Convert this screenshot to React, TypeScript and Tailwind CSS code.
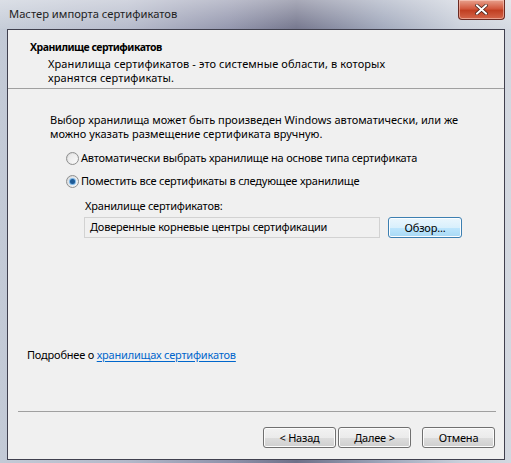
import React from 'react';

const font = { fontFamily: '"Noto Sans", "Open Sans", sans-serif' };

function Radio({ checked, label }: { checked?: boolean; label: string }) {
  return (
    <label className="flex items-center gap-[2px] h-[14px]">
      <span className="w-[13px] h-[13px] rounded-full border border-[#8e8f8f] bg-gradient-to-br from-[#d4d4d4] to-[#fbfbfb] flex items-center justify-center">
        <span className="w-[9px] h-[9px] rounded-full bg-gradient-to-br from-[#e6e6e6] to-[#fafafa] flex items-center justify-center">
          {checked && <span className="w-[5px] h-[5px] rounded-full bg-[#1d5a96] shadow-[0_0_1px_1px_#6fb0e6]" />}
        </span>
      </span>
      <span>{label}</span>
    </label>
  );
}

function Btn({ children, blue, className }: { children: React.ReactNode; blue?: boolean; className?: string }) {
  return (
    <button
      className={
        'h-[21px] rounded-[3px] border text-[11px] tracking-[-0.2px] text-black leading-none flex items-center justify-center ' +
        (blue
          ? 'border-[#3c7fb1] bg-[linear-gradient(#eaf6fd_0%,#d9f0fc_50%,#bee6fd_51%,#a7d9f5_100%)] shadow-[inset_0_0_0_1px_#fbfdff] '
          : 'border-[#707070] bg-[linear-gradient(#f2f2f2_0%,#ebebeb_50%,#dddddd_51%,#cfcfcf_100%)] shadow-[inset_0_0_0_1px_#fcfcfc] ') +
        (className ?? '')
      }
    >
      {children}
    </button>
  );
}

export default function App() {
  return (
    <div
      style={font}
      className="w-[511px] h-[463px] flex flex-col bg-[linear-gradient(90deg,#c3cad6_0%,#b3b8c9_25%,#8f92aa_45%,#6f7189_58%,#9ea6ba_75%,#c9cfda_90%,#d3d8e0_100%)] text-[11px] tracking-[-0.2px] text-black"
    >
      {/* title bar */}
      <div className="h-[29px] shrink-0 flex items-start justify-between pl-[9px] pr-[6px] bg-[linear-gradient(rgba(255,255,255,0.4),rgba(255,255,255,0.05))]">
        <div className="pt-[6px] text-[11.2px] tracking-normal text-[#1e1e1e]">Мастер импорта сертификатов</div>
        <div className="w-[47px] h-[20px] rounded-b-[4px] border border-t-0 border-[#6b2a22] bg-[linear-gradient(#e8a18d_0%,#d2593f_45%,#c13f22_55%,#d4664a_100%)] shadow-[inset_0_0_0_1px_rgba(255,220,210,0.5)] flex items-center justify-center">
          <svg width="13" height="11" viewBox="0 0 13 11">
            <path d="M2 1.5 L11 9.5 M11 1.5 L2 9.5" stroke="#3a1a14" strokeWidth="3.4" strokeLinecap="square" />
            <path d="M2 1.5 L11 9.5 M11 1.5 L2 9.5" stroke="#ffffff" strokeWidth="2" strokeLinecap="square" />
          </svg>
        </div>
      </div>

      {/* client area */}
      <div className="flex-1 ml-[7px] mr-[6px] mb-[3px] border border-[#40404e] bg-[#f0f0f0] flex flex-col">
        <div className="border-b border-[#a0a0a0] pt-[9px] pb-[3px] pl-[22px]">
          <div className="font-bold text-[10.5px] tracking-[-0.5px] leading-[16px]">Хранилище сертификатов</div>
          <div className="pl-[18px] leading-[14px] mt-[2px] tracking-[0.1px]">
            Хранилища сертификатов - это системные области, в которых
            <br />
            хранятся сертификаты.
          </div>
        </div>

        <div className="flex flex-col pl-[42px] pt-[24px]">
          <div className="leading-[14px] tracking-normal">
            Выбор хранилища может быть произведен Windows автоматически, или же
            <br />
            можно указать размещение сертификата вручную.
          </div>
          <div className="pl-[16px] mt-[10px] flex flex-col gap-[9px]">
            <Radio label="Автоматически выбрать хранилище на основе типа сертификата" />
            <Radio checked label="Поместить все сертификаты в следующее хранилище" />
          </div>
          <div className="pl-[34px] mt-[11px]">
            <div className="leading-[14px] pl-[1px]">Хранилище сертификатов:</div>
            <div className="flex items-center gap-[8px] mt-[4px]">
              <div className="w-[296px] h-[21px] border border-[#d2d2d2] bg-[#f0f0f0] pl-[5px] flex items-center">
                Доверенные корневые центры сертификации
              </div>
              <Btn blue className="w-[74px]">Обзор...</Btn>
            </div>
          </div>
          <div className="-ml-[23px] mt-[110px] leading-[14px]">
            Подробнее о{' '}
            <a className="text-[#0066cc] underline underline-offset-2">хранилищах сертификатов</a>
          </div>
        </div>

        <div className="mt-[49px] ml-[10px] mr-[8px] border-t border-[#a0a0a0]" />
        <div className="flex justify-end items-center pr-[9px] pt-[15px]">
          <Btn className="w-[73px]">&lt; Назад</Btn>
          <Btn className="w-[73px] ml-[2px]">Далее &gt;</Btn>
          <Btn className="w-[73px] ml-[11px]">Отмена</Btn>
        </div>
        <div className="flex-1" />
      </div>
    </div>
  );
}
